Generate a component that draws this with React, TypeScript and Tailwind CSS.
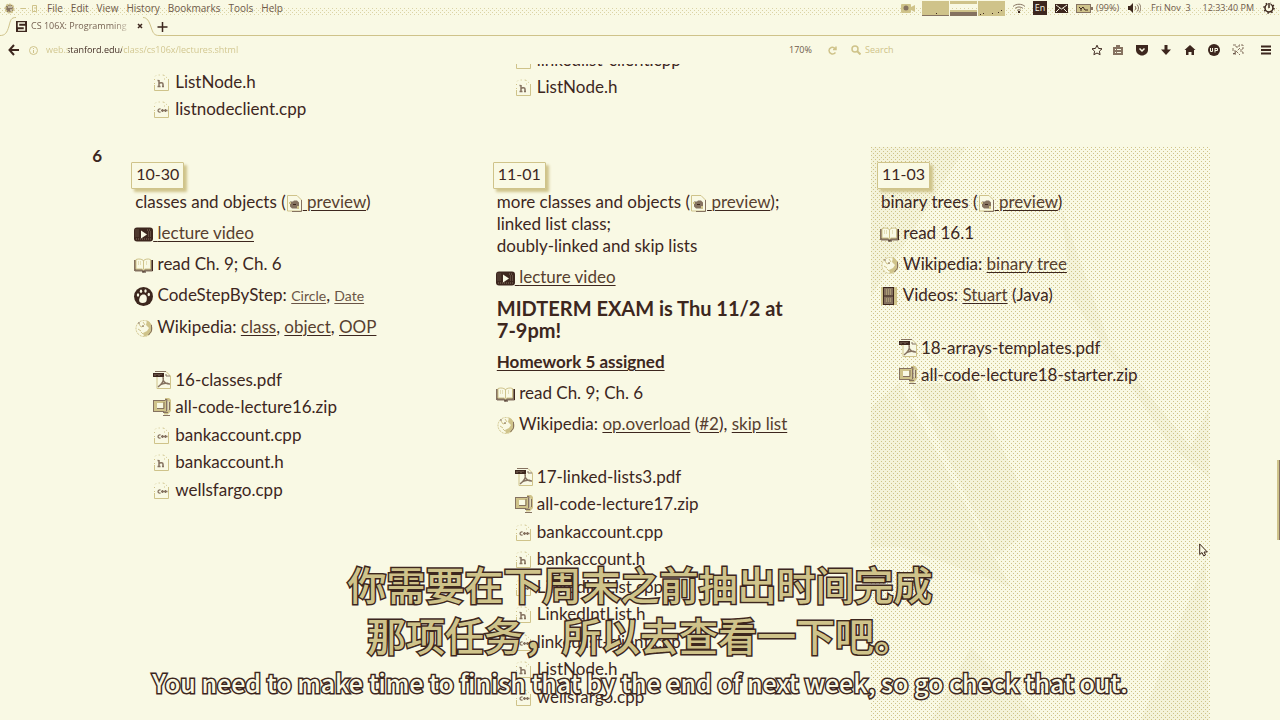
import type { ReactNode } from "react";

const INK = "#3d271e";
const MID = "#857260";
const TAN = "#cfc38a";
const PAPER = "#f9f9e4";

function Svg({ w, h, className = "", children }: { w: number; h: number; className?: string; children: ReactNode }) {
  return (
    <svg width={w} height={h} viewBox={`0 0 ${w} ${h}`} fill="none" aria-hidden="true" className={`shrink-0 ${className}`}>
      {children}
    </svg>
  );
}

/* ---------- lecture icons ---------- */

const inlineIcon = "inline align-[-4px] -ml-px";

function PreviewIcon() {
  return (
    <Svg w={17} h={18} className="inline align-[-4px]">
      <path d="M1.5 1.5H11L15.5 6V17H1.5Z" fill={PAPER} stroke={TAN} />
      <path d="M15.5 6V17.5H6" stroke={MID} />
      <path d="M4 7.500h3l1-1h3l2 2v4l-2 2H6l-2-2Z" fill={MID} />
      <path d="M3 8h2v2H3zM11 12h2v3h-2z" fill={TAN} />
      <path d="M7 10h3v1H7z" fill={INK} />
    </Svg>
  );
}

function VideoIcon() {
  return (
    <Svg w={19} h={15} className="-ml-px inline align-[-3px]">
      <rect x="0" y="0.5" width="19" height="14" rx="3" fill={INK} />
      <path d="M1.5 3h4M1.5 5h3M1.5 7h3M1.5 9h3M13 3h4M14 5h3M14 7h3M14 9h3M2 12h15" stroke={MID} strokeDasharray="1 1" />
      <path d="M7 3.5L13 7.5L7 11.5Z" fill={PAPER} />
    </Svg>
  );
}

function BookIcon() {
  return (
    <Svg w={19} h={15} className="-ml-px inline align-[-3px]">
      <path d="M1 2V13.5H8L9.5 14.5L11 13.5H18.5V2Z" fill={MID} />
      <path d="M2 1.5C5 0.5 7.500 1 9.500 2.500C11.500 1 14 0.500 16.500 1.500V11H11L9.500 12L8 11H2Z" fill={PAPER} stroke={TAN} />
      <path d="M9.500 3V11" stroke={TAN} />
      <path d="M4 4h3M4 6h3M12 4h2M12 6h2" stroke={TAN} strokeDasharray="1 1" />
      <path d="M.500 2V13" stroke={MID} />
      <path d="M18.500 2V13M8 14h4" stroke={INK} />
    </Svg>
  );
}

function PawIcon() {
  return (
    <Svg w={19} h={19} className="-ml-px inline align-[-5px]">
      <circle cx="9.500" cy="9.500" r="9.500" fill={INK} />
      <path d="M9.500 7.500C12.500 7.500 12.800 10 12.800 12C12.800 15 11 16 8.500 16C6 16 4.800 14.500 5.200 12.500C5.700 10 6.500 7.500 9.500 7.500Z" fill={PAPER} />
      <ellipse cx="4" cy="8" rx="1.200" ry="1.800" fill={PAPER} />
      <ellipse cx="7" cy="4.300" rx="1.200" ry="1.800" fill={PAPER} />
      <ellipse cx="11.500" cy="4" rx="1.200" ry="1.800" fill={PAPER} />
      <ellipse cx="14.800" cy="7.500" rx="1.200" ry="1.800" fill={PAPER} />
    </Svg>
  );
}

function WikiIcon() {
  return (
    <Svg w={19} h={18} className={inlineIcon}>
      <circle cx="10" cy="9.500" r="8" fill={PAPER} stroke={TAN} strokeDasharray="2 1" />
      <path d="M13 1.500C19 4 20 12 15 16L10 17.500L9 14L13 12L15 9L12 6Z" fill={TAN} />
      <path d="M5 5l2 3 3-1M9 3l2 3M4 10l3 2M7 13l2 2" stroke={TAN} />
      <path d="M17.500 6v6l-3 4M4 4h2M8 7h2" stroke={MID} />
    </Svg>
  );
}

function FilmIcon() {
  return (
    <Svg w={19} h={18} className={inlineIcon}>
      <rect x="1" y="0" width="16" height="18" fill={TAN} />
      <rect x="4" y="1" width="10" height="16" fill={MID} />
      <path d="M3.500 0V18M13.500 0V18M4 .500h10M4 9h9M4 17.500h9" stroke={INK} />
      <path d="M6 3h6M6 5h6M6 7h6M6 12h6M6 14h6" stroke={TAN} strokeDasharray="1 1" />
    </Svg>
  );
}

/* ---------- file icons ---------- */

type FileKind = "pdf" | "zip" | "cpp" | "h";

function FileIcon({ kind }: { kind: FileKind }) {
  if (kind === "pdf") {
    return (
      <Svg w={18} h={18}>
        <path d="M4 .500H17.500V18H4" fill={PAPER} />
        <path d="M4 .500H13L17.500 5V17.500H4V6" stroke={TAN} />
        <path d="M2 .500h11M13 3v2h4" stroke={MID} />
        <path d="M0 2H11V6H0Z" fill={INK} />
        <path d="M2 3v2M4 3v1M6 3v2M8 3v1" stroke={MID} />
        <path d="M10 6C11 9 9 13 5 16M10 9C11 11 13 13 17 13M7 14C10 12 14 12 16 13" stroke={MID} strokeWidth="1.500" />
      </Svg>
    );
  }
  if (kind === "zip") {
    return (
      <Svg w={18} h={18}>
        <rect x=".500" y="2.500" width="13" height="11" fill={TAN} stroke={MID} />
        <rect x="4" y="5" width="6" height="5" fill={PAPER} />
        <path d="M4 10.500h7V4" stroke={MID} />
        <path d="M12 1h3l2 2v9l-3 3h-3" stroke={TAN} strokeWidth="3" />
        <path d="M12 1.500h2v11M16.500 4v8M10 14.500h5M10 17.500h7" stroke={MID} />
      </Svg>
    );
  }
  return (
    <Svg w={18} h={18}>
      <path d="M1.500 12V17.500H15.500V6" stroke={TAN} />
      <path d="M1.500 11V4l2-2h7l5 4M11 2v4h3" stroke={TAN} strokeDasharray="1 3" />
      {kind === "h" ? (
        <path d="M6 7V14M4.500 7.500h1M6 10.500C7 9.500 10 9.500 10 11V14M4.500 13.500h3M9 13.500h2" stroke={MID} strokeWidth="1.500" />
      ) : (
        <path d="M7.500 9C4.500 8.300 4 12.700 7.500 12M8 10.500h3M9.500 9v3M11 10.500h3.500M12.500 9v3" stroke={MID} strokeWidth="1.300" />
      )}
    </Svg>
  );
}

function FileList({ files, className = "" }: { files: [FileKind, string][]; className?: string }) {
  return (
    <ul className={`pl-[18px] ${className}`}>
      {files.map(([kind, name]) => (
        <li key={name} className="flex items-center odd:h-[27px] even:h-[28px]">
          <a href="#file" className="flex items-center gap-1 whitespace-nowrap">
            <FileIcon kind={kind} />
            <span>{name}</span>
          </a>
        </li>
      ))}
    </ul>
  );
}

function Link({ children, small = false }: { children: ReactNode; small?: boolean }) {
  return (
    <a
      href="#link"
      className={
        small
          ? "text-[14px] text-[#6a5546] underline decoration-1 underline-offset-2"
          : "text-[#57402f] underline decoration-[#3d271e] decoration-1 underline-offset-2"
      }
    >
      {children}
    </a>
  );
}

function DateTag({ children }: { children: ReactNode }) {
  return (
    <h2 className="-ml-1 mb-0.5 flex h-[27px] w-fit items-center rounded-[1px] border border-[#cfc38a] bg-[#f9f9e4] px-1 pb-1 text-[16px] shadow-[3px_3px_3px_#cfc38a]">
      {children}
    </h2>
  );
}

/* Sparse one-pixel screen laid behind the menu bar and the current day. */
function Screen({ id, children }: { id: string; children?: ReactNode }) {
  return (
    <svg className="absolute inset-0 -z-10 h-full w-full" aria-hidden="true" shapeRendering="crispEdges">
      <defs>
        <pattern id={id} width="4" height="4" patternUnits="userSpaceOnUse">
          <rect x="0" y="0" width="1" height="1" fill={TAN} />
          <rect x="2" y="2" width="1" height="1" fill={TAN} />
        </pattern>
      </defs>
      <rect width="100%" height="100%" fill={`url(#${id})`} />
      {children}
    </svg>
  );
}

/* ---------- browser chrome ---------- */

function MenuBar() {
  return (
    <header className="relative isolate flex h-4 shrink-0 items-center justify-between pr-[5px] pl-1 text-[9px] leading-4 text-[#6f5a4a]">
      <div className="absolute inset-x-0 top-2 bottom-0 -z-10 opacity-70">
        <Screen id="menu-dots" />
      </div>
      <nav className="flex items-center" aria-label="Menu bar">
        <Svg w={11} h={11}>
          <circle cx="5.500" cy="5.500" r="4" fill={MID} stroke={TAN} strokeWidth="2" strokeDasharray="2 1" />
          <path d="M4 4h4M6 7h2" stroke={PAPER} />
        </Svg>
        <Svg w={32} h={11}>
          <path d="M6 5.500h5M17.500 2.500h4v6h-4zM19 5h2" stroke={TAN} />
        </Svg>
        <div className="flex gap-2 text-[10px]">
          {["File", "Edit", "View", "History", "Bookmarks", "Tools", "Help"].map((m) => (
            <button key={m} type="button">{m}</button>
          ))}
        </div>
      </nav>
      <div className="flex items-center">
        <Svg w={14} h={11} className="mr-[7px]">
          <rect x="0" y="1" width="10" height="9" rx="1" fill={TAN} />
          <path d="M10 4l4-2v7l-4-2Z" fill={TAN} />
          <circle cx="5" cy="5" r="2.500" fill={MID} />
        </Svg>
        <Svg w={84} h={15} className="mr-1.5">
          <path d="M0 0H27V14H0ZM56 0H83V15H56ZM28 0H55V3H28ZM28 9H55V11H28Z" fill={TAN} />
          <path d="M0 14h27v1H0zM28 11h27v4H28z" fill={MID} />
          <path d="M14 12.500h1M58 13.500h1M61 12.500h1M70 12.500h1M76 11.500h1M79 9.500h1" stroke={INK} />
        </Svg>
        <Svg w={14} h={10} className="mr-[7px]">
          <path d="M1 3.500C4 .500 10 .500 13 3.500M3 5.500C5 3.500 9 3.500 11 5.500M5 7.500C6 6.500 8 6.500 9 7.500" stroke={MID} />
          <path d="M6 8h2v2H6z" fill={INK} />
        </Svg>
        <span className="mr-2 flex h-3.5 w-3.5 items-center justify-center bg-[#3d271e] text-[9px] text-[#f9f9e4]">En</span>
        <Svg w={13} h={9} className="mr-2">
          <rect width="13" height="9" fill={INK} />
          <path d="M1 1l5.500 4L12 1M1 8l3.500-3.500M12 8L8.500 4.500" stroke={PAPER} />
        </Svg>
        <Svg w={17} h={9} className="mr-[3px]">
          <rect x=".500" y=".500" width="14" height="8" fill={TAN} stroke={MID} />
          <path d="M15 3h2v3h-2z" fill={MID} />
          <path d="M3 3l2 2 2-2 2 3 3 0M4 6h2" stroke={INK} />
        </Svg>
        <span className="mr-[9px]">(99%)</span>
        <Svg w={13} h={10} className="mr-2.5">
          <path d="M0 3h2l3-3v10L2 7H0Z" fill={INK} />
          <path d="M7 3c1 1 1 3 0 4M9 1.500c2 2 2 5 0 7M11 .500c2.500 3 2.500 6 0 9" stroke={MID} />
        </Svg>
        <span className="mr-3 whitespace-pre">Fri Nov  3</span>
        <span className="mr-[9px]">12:33:40 PM</span>
        <Svg w={12} h={12}>
          <circle cx="6" cy="6" r="4" stroke={INK} strokeWidth="1.500" />
          <circle cx="6" cy="6" r="5" stroke={INK} strokeWidth="1.500" strokeDasharray="1.500 2.400" />
          <path d="M6 0v6" stroke={PAPER} strokeWidth="3" />
          <path d="M6 1v5" stroke={INK} strokeWidth="1.500" />
        </Svg>
      </div>
    </header>
  );
}

function TabStrip() {
  return (
    <div className="flex h-5 shrink-0 items-stretch text-[9px] text-[#6f5a4a]">
      <Svg w={16} h={20}>
        <path d="M0 19.500C5 19.500 7 17 9 10C10.500 4 11 1.500 16 1.500" stroke={TAN} />
      </Svg>
      <div className="flex items-center">
        <Svg w={11} h={11}>
          <rect width="11" height="11" fill={INK} />
          <path d="M9 2H2.500V5.500H8.500V9H2" stroke={PAPER} strokeWidth="1.500" />
        </Svg>
        <span className="ml-1 w-[102px] bg-linear-to-r from-[#6f5a4a] from-80% to-[#f9f9e4] to-100% bg-clip-text whitespace-nowrap text-transparent">
          CS 106X: Programming
        </span>
        <button type="button" aria-label="Close tab" className="ml-1">
          <Svg w={6} h={6}>
            <path d="M1 1l4 4M5 1l-4 4" stroke={INK} strokeWidth="1.500" />
          </Svg>
        </button>
      </div>
      <Svg w={16} h={20}>
        <path d="M0 1.500C4 1.500 6 5 8 11C10 17 11 19.500 16 19.500" stroke={TAN} />
      </Svg>
      <button type="button" aria-label="New tab" className="-ml-0.5 h-5">
        <Svg w={11} h={20}>
          <path d="M5.500 6v10M.500 11h10" stroke={INK} strokeWidth="1.500" />
          <path d="M2 19.500h9" stroke={TAN} />
        </Svg>
      </button>
      <div className="grow border-b border-[#cfc38a]" />
    </div>
  );
}

const toolbar: [string, ReactNode][] = [
  ["Bookmark", <path key="i" d="M6 1.200l1.500 3.200 3.500.400-2.600 2.400.700 3.500L6 9l-3.100 1.700.700-3.500L1 4.800l3.500-.400Z" stroke={INK} />],
  ["Library", <g key="i"><path d="M1 3h10v8H1ZM4 1h4v2H4Z" fill={MID} /><path d="M5 5.500h4M5 8.500h4M3 5.500h1M3 8.500h1" stroke={PAPER} /></g>],
  ["Pocket", <g key="i"><path d="M0 1h12V6c0 3-3 5.500-6 5.500S0 9 0 6Z" fill={INK} /><path d="M3.500 4.500L6 7l2.500-2.500" stroke={PAPER} strokeWidth="1.500" /></g>],
  ["Downloads", <path key="i" d="M4.500 1h3v4.500H11L6 11 1 5.500h3.500Z" fill={INK} />],
  ["Home", <path key="i" d="M6 1l5.500 5H10v5H7.500V8h-3v3H2V6H.500Z" fill={INK} />],
  ["Blocker", <g key="i"><circle cx="6" cy="6" r="6" fill={INK} /><path d="M2.500 4v3.500h2V4M7 4v4.500M7 4.500h2.500V6.500H7" stroke={PAPER} /></g>],
  ["Add-on", <g key="i"><path d="M1 1h3v2h3V1h4v4H9v3h2v3M1 4v3h3l-1 4M4 7l4 4M8 4L3 9" stroke={MID} strokeDasharray="3 1" /><path d="M1 10l2-1" stroke={INK} /></g>],
];

function NavBar() {
  return (
    <div className="flex h-7 shrink-0 items-center pr-2 pl-2 text-[9px] text-[#6f5a4a]">
      <button type="button" aria-label="Back">
        <Svg w={11} h={12}>
          <path d="M6 1L1.500 6L6 11M2 6h9" stroke={INK} strokeWidth="2" />
        </Svg>
      </button>
      <Svg w={9} h={9} className="ml-2.5">
        <circle cx="4.500" cy="4.500" r="4" stroke={TAN} />
        <path d="M4.500 2v1M4.500 4v3" stroke={TAN} />
      </Svg>
      <input
        aria-label="Address"
        defaultValue="web.stanford.edu/class/cs106x/lectures.shtml"
        className="ml-2 min-w-0 grow bg-[linear-gradient(90deg,#cfc38a_22px,#3d271e_22px,#3d271e_76px,#cfc38a_76px)] bg-clip-text text-[9px] text-transparent outline-none"
      />
      <span className="w-[39px]">170%</span>
      <button type="button" aria-label="Reload" className="mr-3.5">
        <Svg w={9} h={9}>
          <path d="M7.500 6.500C5 9.500 1 7.500 1 4.500C1 1.500 5 0 7 2.500M8 .500V3.500H5" stroke={TAN} strokeWidth="1.500" />
        </Svg>
      </button>
      <Svg w={10} h={10} className="mr-1">
        <circle cx="4" cy="4" r="3" stroke={TAN} strokeWidth="1.500" />
        <path d="M6 6l3.500 3.500" stroke={TAN} strokeWidth="2" />
      </Svg>
      <input aria-label="Search" placeholder="Search" className="w-[226px] text-[9px] outline-none placeholder:text-[#cfc38a]" />
      <div className="flex gap-3">
        {toolbar.map(([label, art]) => (
          <button key={label} type="button" aria-label={label} className="first:-mr-[3px]">
            <Svg w={12} h={12}>{art}</Svg>
          </button>
        ))}
      </div>
      <button type="button" aria-label="Menu" className="ml-4">
        <Svg w={12} h={12}>
          <path d="M1 2.500h10M1 6h10M1 9.500h10" stroke={INK} strokeWidth="2" />
        </Svg>
      </button>
    </div>
  );
}

/* ---------- schedule ---------- */

function Preview() {
  return (
    <>
      (<PreviewIcon />
      <Link>{"\u00a0"}preview</Link>)
    </>
  );
}

function Schedule() {
  return (
    <div className="mr-[70px] ml-20">
      <table className="-mt-[18px] w-full table-fixed border-collapse text-left text-[17px] leading-[22px]">
        <colgroup>
          <col className="w-[4%]" />
          <col className="w-[32%]" />
          <col className="w-[34%]" />
          <col className="w-[30%]" />
        </colgroup>
        <tbody className="align-top">
          <tr className="h-[101px]">
            <td />
            <td className="pt-[22px] pl-2.5">
              <FileList files={[["h", "ListNode.h"], ["cpp", "listnodeclient.cpp"]]} />
            </td>
            <td className="pl-2.5">
              <FileList files={[["cpp", "linkedlist-client.cpp"], ["h", "ListNode.h"]]} />
            </td>
            <td />
          </tr>
          <tr>
            <th scope="row" className="pr-[23px] text-right align-top leading-[18px] font-bold">6</th>
            <td className="pt-[15px] pl-2.5">
              <DateTag>10-30</DateTag>
              <div className="flex flex-col gap-[9px]">
                <p>classes and objects <Preview /></p>
                <p><VideoIcon /><Link>{"\u00a0"}lecture video</Link></p>
                <p><BookIcon /> read Ch. 9; Ch. 6</p>
                <p><PawIcon /> CodeStepByStep: <Link small>Circle</Link>, <Link small>Date</Link></p>
                <p><WikiIcon /> Wikipedia: <Link>class</Link>, <Link>object</Link>, <Link>OOP</Link></p>
              </div>
              <FileList
                className="mt-7"
                files={[
                  ["pdf", "16-classes.pdf"],
                  ["zip", "all-code-lecture16.zip"],
                  ["cpp", "bankaccount.cpp"],
                  ["h", "bankaccount.h"],
                  ["cpp", "wellsfargo.cpp"],
                ]}
              />
            </td>
            <td className="pt-[15px] pr-20 pb-6 pl-2.5">
              <DateTag>11-01</DateTag>
              <div className="flex flex-col gap-[9px]">
                <p className="whitespace-nowrap">
                  more classes and objects <Preview />;<br />linked list class;<br />doubly-linked and skip lists
                </p>
                <p><VideoIcon /><Link>{"\u00a0"}lecture video</Link></p>
                <h3 className="mb-px text-[20px] font-bold">MIDTERM EXAM is Thu 11/2 at <span className="whitespace-nowrap">7-9pm!</span></h3>
                <p className="font-bold"><Link><span className="text-[#3d271e]">Homework 5 assigned</span></Link></p>
                <p><BookIcon /> read Ch. 9; Ch. 6</p>
                <p className="whitespace-nowrap"><WikiIcon /> Wikipedia: <Link>op.overload</Link> (<Link>#2</Link>), <Link>skip list</Link></p>
              </div>
              <FileList
                className="mt-7"
                files={[
                  ["pdf", "17-linked-lists3.pdf"],
                  ["zip", "all-code-lecture17.zip"],
                  ["cpp", "bankaccount.cpp"],
                  ["h", "bankaccount.h"],
                  ["cpp", "LinkedIntList.cpp"],
                  ["h", "LinkedIntList.h"],
                  ["cpp", "linkedlist-client.cpp"],
                  ["h", "ListNode.h"],
                  ["cpp", "wellsfargo.cpp"],
                ]}
              />
            </td>
            <td className="relative isolate pt-[15px] pl-2.5">
              <Screen id="day-dots">
                <g fill={TAN} fillOpacity="0.1">
                  <path d="M0 0H95L0 150ZM0 260L28 236L140 440L30 400H0Z" />
                  <path d="M40 236H100L150 340V390L125 410ZM190 60L240 200L320 300L338 260V330L300 300L200 150Z" />
                  <path d="M335 410L270 573H338ZM60 573L100 500L170 573Z" />
                </g>
              </Screen>
              <DateTag>11-03</DateTag>
              <div className="flex flex-col gap-[9px]">
                <p>binary trees <Preview /></p>
                <p><BookIcon /> read 16.1</p>
                <p><WikiIcon /> Wikipedia: <Link>binary tree</Link></p>
                <p><FilmIcon /> Videos: <Link>Stuart</Link> (Java)</p>
              </div>
              <FileList
                className="mt-7"
                files={[["pdf", "18-arrays-templates.pdf"], ["zip", "all-code-lecture18-starter.zip"]]}
              />
            </td>
          </tr>
        </tbody>
      </table>
    </div>
  );
}

export default function App() {
  return (
    <div className="relative flex h-screen flex-col overflow-hidden bg-[#f9f9e4] font-['Open_Sans','Noto_Sans',sans-serif] text-[#3d271e]">
      <MenuBar />
      <TabStrip />
      <NavBar />
      <main className="min-h-0 grow overflow-hidden font-[Lato,'Noto_Sans',sans-serif]">
        <Schedule />
      </main>

      <div className="absolute top-[460px] right-0 h-20 w-[3px] border-l-2 border-[#cfc38a] bg-[#857260]" />
      <svg width="9" height="14" viewBox="0 0 9 14" aria-hidden="true" className="absolute top-[543px] right-[72px]">
        <path d="M.700 1V11.500L3 9.500L4.700 13L6.500 12L5 9H8.300Z" fill={PAPER} stroke={INK} />
      </svg>
      <div className="absolute inset-x-0 bottom-[18px] text-center font-['Noto_Sans_CJK_SC',sans-serif] font-medium whitespace-nowrap [paint-order:stroke_fill] [-webkit-text-stroke:3px_#3d271e]">
        <p lang="zh-CN" className="mb-0.5 text-[39px] leading-[51px] text-[#cfc38a]">
          你需要在下周末之前抽出时间完成<br />那项任务，所以去查看一下吧。
        </p>
        <p lang="en" className="text-[25px] leading-[40px] text-[#f9f9e4]">
          You need to make time to finish that by the end of next week, so go check that out.
        </p>
      </div>
    </div>
  );
}
